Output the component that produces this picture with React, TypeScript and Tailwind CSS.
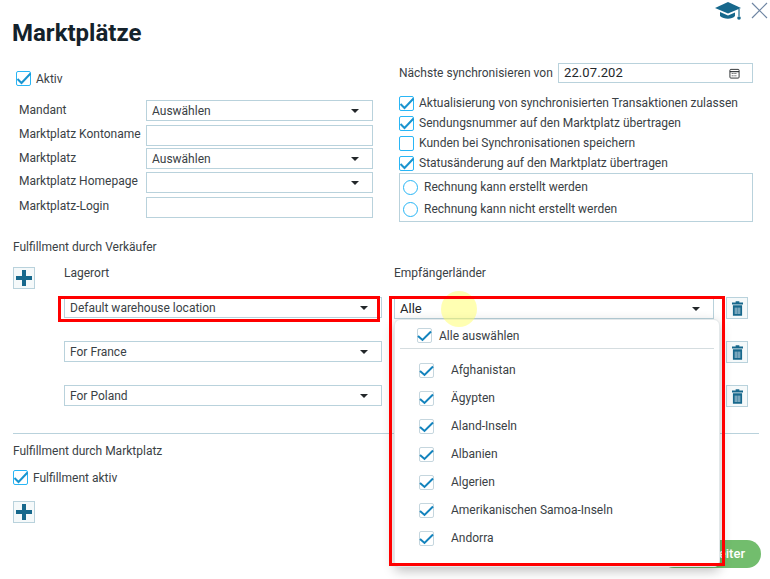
const text = "text-[12px] leading-[14px] text-[#3a4145]";

function Checkbox({ checked = true }: { checked?: boolean }) {
  return (
    <span className="relative block w-[15px] h-[15px] shrink-0 rounded-[2px] border border-[#29b6f6] bg-white">
      {checked && (
        <svg viewBox="0 0 15 15" className="absolute left-[-1px] top-[-1px] w-[15px] h-[15px]">
          <path d="M1.5 8 L5.5 12 L14.5 2.5" fill="none" stroke="#1a94cf" strokeWidth="2" />
        </svg>
      )}
    </span>
  );
}

function ListCheck() {
  return (
    <span className="relative block w-[15px] h-[15px] shrink-0 rounded-[2px] border border-[#c5d6de] bg-white">
      <svg viewBox="0 0 15 15" className="absolute left-[-1px] top-[-1px] w-[15px] h-[15px]">
        <path d="M1 8 L5.5 12 L14 3.5" fill="none" stroke="#1383bd" strokeWidth="2" />
      </svg>
    </span>
  );
}

function Caret() {
  return (
    <svg viewBox="0 0 8 4" className="w-[8px] h-[4px] shrink-0">
      <path d="M0 0 H8 L4 4 Z" fill="#23272a" />
    </svg>
  );
}

function Select({ value, className }: { value?: string; className: string }) {
  return (
    <div className={`flex items-center justify-between border border-[#b9d2dc] bg-white pl-[5px] pr-[13px] ${className}`}>
      <span className={text}>{value}</span>
      <Caret />
    </div>
  );
}

function Field({ label, value, select, className, labelClass }: { label: string; value?: string; select?: boolean; className?: string; labelClass: string }) {
  return (
    <div className={`flex h-[21px] items-start ${className ?? ""}`}>
      <span className={`w-[127px] ${labelClass} ${text}`}>{label}</span>
      {select ? (
        <Select value={value} className="w-[227px] h-[21px]" />
      ) : (
        <div className="w-[227px] h-[21px] border border-[#b9d2dc] bg-white" />
      )}
    </div>
  );
}

function Plus() {
  return (
    <button className="flex w-[22px] h-[22px] items-center justify-center border border-[#b9d2dc] bg-[#f5f9fa]">
      <svg viewBox="0 0 16 16" className="w-[16px] h-[16px]">
        <path d="M6 0 H10 V6 H16 V10 H10 V16 H6 V10 H0 V6 H6 Z" fill="#17688c" />
      </svg>
    </button>
  );
}

function Trash() {
  return (
    <button className="flex w-[22px] h-[22px] shrink-0 items-center justify-center border border-[#b9d2dc] bg-[#f5f9fa]">
      <svg viewBox="0 0 12 16" className="w-[11px] h-[15px]">
        <path d="M4 0 H8 V1.5 H12 V3.5 H0 V1.5 H4 Z M1 4.5 H11 V16 H1 Z" fill="#17688c" />
        <path d="M3.5 7 V14 M5.2 7 V14 M6.8 7 V14 M8.5 7 V14" stroke="#cfe0e8" strokeWidth="0.8" />
      </svg>
    </button>
  );
}

function CheckRow({ label, checked }: { label: string; checked?: boolean }) {
  return (
    <label className="flex h-[20px] items-center gap-[5px]">
      <Checkbox checked={checked} />
      <span className={text}>{label}</span>
    </label>
  );
}

function Radio({ label }: { label: string }) {
  return (
    <div className="flex h-[22px] items-center gap-[6px] pl-[3px]">
      <span className="block w-[15px] h-[15px] rounded-full border border-[#29b6f6] bg-white" />
      <span className={text}>{label}</span>
    </div>
  );
}

const countries = ["Afghanistan", "Ägypten", "Aland-Inseln", "Albanien", "Algerien", "Amerikanischen Samoa-Inseln", "Andorra"];

export default function App() {
  return (
    <div className="relative w-[770px] h-[579px] overflow-hidden bg-white" style={{ fontFamily: "Roboto, sans-serif" }}>
      <div className="flex h-[20px] items-center justify-end gap-[10px] pr-[2px] pt-[1px]">
        <svg viewBox="0 0 26 20" className="w-[26px] h-[20px]">
          <path d="M0 7 L13 1 L26 7 L13 12.5 Z" fill="#17688c" />
          <path d="M5 11 L13 14.5 L20 11.5 V15 C17 18.5 9 18.5 5 15 Z" fill="#17688c" />
          <path d="M24 8 V15" stroke="#17688c" strokeWidth="1.2" />
          <circle cx="24" cy="17" r="1.8" fill="#17688c" />
        </svg>
        <svg viewBox="0 0 17 17" className="w-[17px] h-[17px]">
          <path d="M1 1 L16 16 M16 1 L1 16" stroke="#6f86a3" strokeWidth="1.2" fill="none" />
        </svg>
      </div>

      <h1 className="ml-[12px] mt-[-1px] text-[24px] leading-[28px] font-bold text-[#14222b]">Marktplätze</h1>

      <div className="flex mt-[16px] h-[159px]">
        <div className="ml-[16px] w-[383px]">
          <div className="flex items-center gap-[5px] mt-[8px]">
            <Checkbox />
            <span className={text}>Aktiv</span>
          </div>
          <div className="ml-[3px] mt-[14px] flex flex-col">
            <Field label="Mandant" value="Auswählen" select labelClass="pt-[3px]" />
            <Field label="Marktplatz Kontoname" className="mt-[4px]" labelClass="pt-[2px]" />
            <Field label="Marktplatz" value="Auswählen" select className="mt-[2px]" labelClass="pt-[3px]" />
            <Field label="Marktplatz Homepage" select className="mt-[3px]" labelClass="pt-[2px]" />
            <Field label="Marktplatz-Login" className="mt-[4px]" labelClass="pt-[2px]" />
          </div>
        </div>

        <div className="w-[354px]">
          <div className="flex items-center h-[20px]">
            <span className={`w-[159px] ${text}`}>Nächste synchronisieren von</span>
            <div className="flex flex-1 h-[20px] items-center justify-between border border-[#b9d2dc] pl-[5px] pr-[12px]">
              <span className="text-[13px] tracking-[0.1px] text-[#23272a]">22.07.202</span>
              <svg viewBox="0 0 12 12" className="w-[11px] h-[11px]">
                <rect x="1" y="1.5" width="10" height="9.5" rx="1" fill="none" stroke="#23272a" />
                <path d="M1 4 H11" stroke="#23272a" strokeWidth="1.2" />
                <path d="M3 6 H9 M3 8.5 H9" stroke="#23272a" strokeDasharray="1 1" />
              </svg>
            </div>
          </div>
          <div className="mt-[10px]">
            <CheckRow label="Aktualisierung von synchronisierten Transaktionen zulassen" checked />
            <CheckRow label="Sendungsnummer auf den Marktplatz übertragen" checked />
            <CheckRow label="Kunden bei Synchronisationen speichern" checked={false} />
            <CheckRow label="Statusänderung auf den Marktplatz übertragen" checked />
          </div>
          <div className="h-[49px] border border-[#b9d2dc] pt-[2px]">
            <Radio label="Rechnung kann erstellt werden" />
            <Radio label="Rechnung kann nicht erstellt werden" />
          </div>
        </div>
      </div>

      <div className={`ml-[13px] mt-[18px] ${text}`}>Fulfillment durch Verkäufer</div>

      <div className="flex ml-[13px] mt-[13px]">
        <div className="w-[51px]">
          <Plus />
        </div>
        <div className="w-[330px]">
          <div className={`h-[31px] -mt-[1px] ${text}`}>Lagerort</div>
          <div className="flex flex-col gap-[23px]">
            <Select value="Default warehouse location" className="w-[318px] h-[21px]" />
            <Select value="For France" className="w-[318px] h-[21px]" />
            <Select value="For Poland" className="w-[318px] h-[21px]" />
          </div>
        </div>
        <div className="w-[354px]">
          <div className={`h-[30px] -mt-[1px] mb-[1px] ${text}`}>Empfängerländer</div>
          <div className="flex flex-col gap-[22px]">
            <div className="flex items-start gap-[12px]">
              <div className="flex w-[320px] h-[22px] items-center justify-between border border-[#b9d2dc] pl-[5px] pr-[13px] pt-[1px]">
                <span className="text-[13px] text-[#23272a]">Alle</span>
                <Caret />
              </div>
              <Trash />
            </div>
            <div className="flex pl-[332px]">
              <Trash />
            </div>
            <div className="flex pl-[332px]">
              <Trash />
            </div>
          </div>
        </div>
      </div>

      <div className="ml-[13px] mt-[26px] w-[746px] border-t border-[#b9d2dc]" />
      <div className={`ml-[13px] mt-[10px] ${text}`}>Fulfillment durch Marktplatz</div>
      <div className="ml-[13px] mt-[12px] flex items-center gap-[5px]">
        <Checkbox />
        <span className={text}>Fulfillment aktiv</span>
      </div>
      <div className="ml-[13px] mt-[16px]">
        <Plus />
      </div>

      {/* button behind the open dropdown */}
      <button className="absolute left-[660px] top-[540px] flex w-[101px] h-[28px] items-center justify-end rounded-full bg-[#72bd6d] pr-[16px] text-[13px] font-medium text-white">
        Weiter
      </button>

      {/* open dropdown */}
      <div className="absolute left-[394px] top-[319px] w-[326px] h-[248px] rounded-[6px] border border-[#e3e8ea] bg-white shadow-[0_4px_12px_rgba(0,0,0,0.25)]">
        <div className="mx-[5px] flex h-[29px] items-center gap-[7px] border-b border-[#d5dde0] pl-[17px] pt-[3px]">
          <ListCheck />
          <span className={text}>Alle auswählen</span>
        </div>
        <div className="mt-[7px] pl-[24px]">
          {countries.map((c) => (
            <div key={c} className="flex h-[28px] items-center gap-[17px]">
              <ListCheck />
              <span className={text}>{c}</span>
            </div>
          ))}
        </div>
      </div>

      {/* tutorial highlights drawn on top of the screen */}
      <div className="absolute left-[441px] top-[291px] w-[36px] h-[36px] rounded-full bg-[#ffff66]/50" />
      <div className="absolute left-[58px] top-[296px] w-[322px] h-[26px] border-[3px] border-[#ff0000]" />
      <div className="absolute left-[389px] top-[296px] w-[336px] h-[270px] border-[3px] border-[#ff0000]" />
    </div>
  );
}
